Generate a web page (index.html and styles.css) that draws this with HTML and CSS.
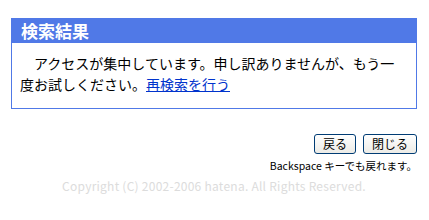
FILE: index.html
```html
<!DOCTYPE html>
<html lang="ja">
<head>
<meta charset="UTF-8" />
<title>検索結果</title>
<link rel="stylesheet" href="styles.css">
</head>
<body>

<div class="result">
  <h2 class="result-title">検索結果</h2>
  <p class="result-body">アクセスが集中しています。申し訳ありませんが、もう一度お試しください。<a href="#">再検索を行う</a></p>
</div>

<div class="actions">
  <button type="button">戻る</button>
  <button type="button">閉じる</button>
</div>
<p class="hint">Backspace キーでも戻れます。</p>

<p class="copyright">Copyright (C) 2002-2006 hatena. All Rights Reserved.</p>

</body>
</html>
```

FILE: styles.css
```css
body {
  font-family: "Noto Sans CJK JP", "DejaVu Sans", sans-serif;
  margin: 18px 12px 0 11px;
  color: #000;
  background: #fff;
}

.result {
  border: 1px solid #5079e7;
}

.result-title {
  margin: 0;
  height: 24px;
  line-height: 24px;
  padding-left: 9px;
  background: #5079e7;
  color: #fff;
  font-size: 17px;
  font-weight: bold;
}

.result-body {
  margin: 0;
  padding: 10px 8px 13px;
  font-size: 14px;
  line-height: 21px;
  text-indent: 14px;
}

.result-body a {
  color: #0033cc;
}

.actions {
  margin-top: 25px;
  display: flex;
  justify-content: flex-end;
  gap: 7px;
}

.actions button {
  margin: 0;
  font-family: "Noto Sans CJK JP", sans-serif;
  font-size: 12px;
  height: 20px;
  padding: 0 8px;
  line-height: 16px;
  background: linear-gradient(#fff, #ecebe6);
  border: 1px solid #003c74;
  border-radius: 3px;
  cursor: pointer;
}

.hint {
  margin: 4px 0 0;
  font-size: 10.5px;
  text-align: right;
}

.copyright {
  margin: 4px 0 0;
  font-size: 12px;
  letter-spacing: 0.25px;
  color: #dcdcdc;
  text-align: center;
}
```
